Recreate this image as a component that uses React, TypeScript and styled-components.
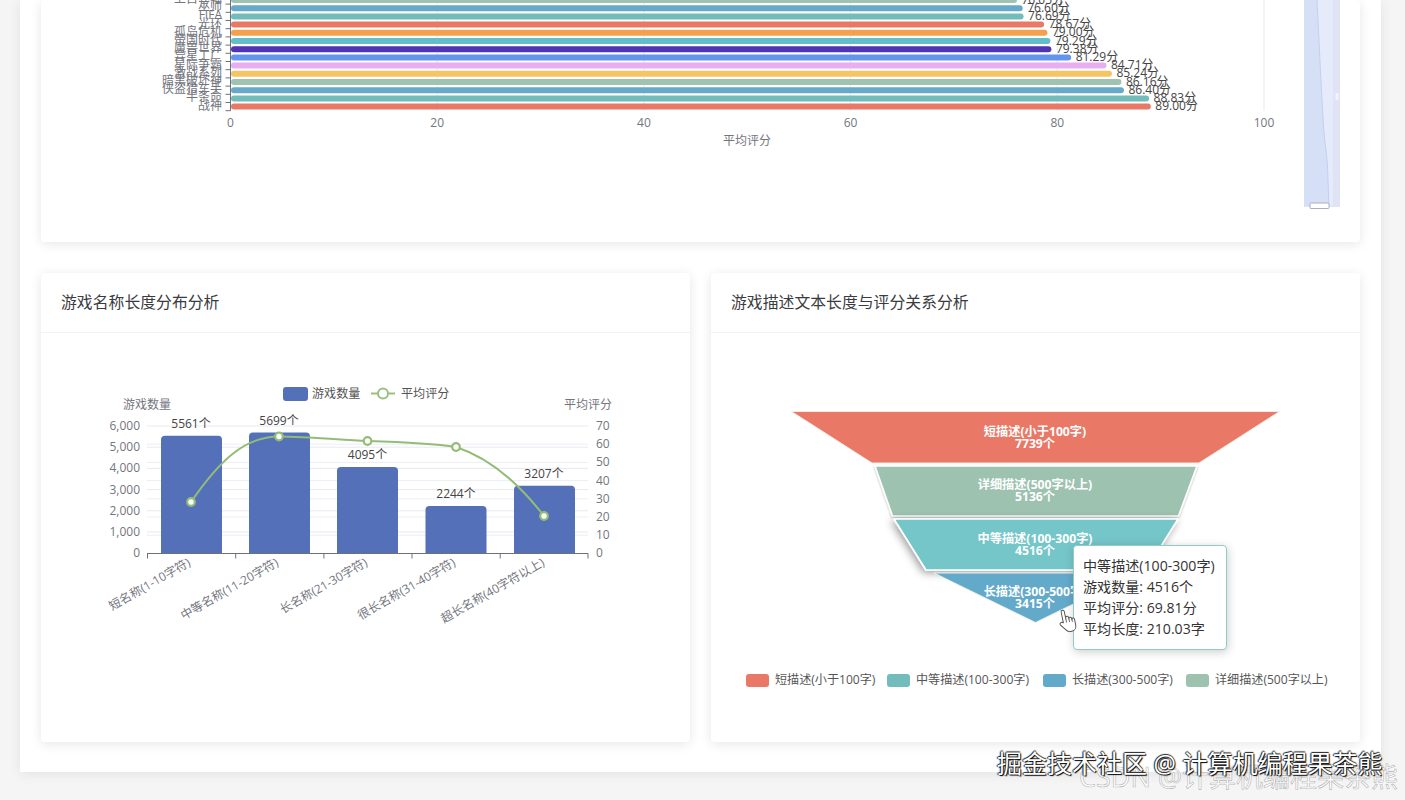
import React from "react";
import styled, { createGlobalStyle } from "styled-components";

const FONT = '"Open Sans", "Noto Sans CJK SC", sans-serif';

const Global = createGlobalStyle`
  html, body { margin: 0; padding: 0; background: #f5f5f5; }
  body { font-family: ${FONT}; }
  #root { height: 800px; overflow: hidden; }
`;

const Page = styled.main`
  position: relative;
  height: 800px;
  overflow: hidden;
  background: #f5f5f5;
`;

const Sheet = styled.div`
  width: 1361px;
  height: 772px;
  margin-left: 20px;
  padding: 0 21px;
  box-sizing: border-box;
  background: #fff;
  box-shadow: 0 2px 12px rgba(0, 0, 0, 0.08);
  display: flex;
  flex-direction: column;
  gap: 31px;
`;

const Card = styled.section<{ $height: number }>`
  position: relative;
  height: ${(p) => p.$height}px;
  background: #fff;
  border-radius: 4px;
  box-shadow: 0 2px 12px rgba(0, 0, 0, 0.1);
  display: flex;
  flex-direction: column;
  overflow: hidden;
`;

const Row = styled.div`
  display: grid;
  grid-template-columns: 1fr 1fr;
  gap: 21px;
`;

const CardHead = styled.header`
  height: 59px;
  padding: 0 20px;
  display: flex;
  align-items: center;
  font-size: 15.85px;
  line-height: 59px;
  color: #3a3c40;
  border-bottom: 1px solid #f0f2f5;
`;

const Chart = styled.svg`
  display: block;
  flex: 1;
  width: 100%;
  font-family: ${FONT};
`;

const Muted = styled.text<{ $anchor?: string }>`
  font-size: 12px;
  fill: #74767e;
  text-anchor: ${(p) => p.$anchor || "middle"};
  dominant-baseline: central;
`;

const Value = styled.text<{ $anchor?: string }>`
  font-size: 12px;
  fill: #444;
  text-anchor: ${(p) => p.$anchor || "middle"};
  dominant-baseline: central;
`;

const LegendText = styled.text`
  font-size: 12.1px;
  fill: #555;
  dominant-baseline: central;
`;

const FunnelText = styled.text`
  font-size: 12.2px;
  font-weight: 700;
  fill: #fff;
  text-anchor: middle;
  dominant-baseline: central;
`;

const Tooltip = styled.div`
  position: absolute;
  left: 362px;
  top: 272px;
  width: 154px;
  height: 105px;
  box-sizing: border-box;
  padding: 9px 9px;
  background: #fff;
  border: 1px solid #8fcbc7;
  border-radius: 4px;
  box-shadow: 1px 2px 10px rgba(0, 0, 0, 0.2);
  font-size: 14.1px;
  line-height: 21px;
  color: #333;
  white-space: nowrap;
`;

const Cursor = styled.svg`
  position: absolute;
  left: 347px;
  top: 335px;
  width: 18px;
  height: 25px;
  transform: rotate(-12deg);
`;

const Marks = styled.div`
  position: absolute;
  inset: 0;
  pointer-events: none;
`;

const Juejin = styled.div`
  position: absolute;
  left: 997px;
  top: 746px;
  font-size: 25px;
  line-height: 34px;
  color: #fff;
  white-space: nowrap;
  text-shadow: 1px 1px 1px #000, -1px 0 1px #222, 0 -1px 1px #222;
`;

const Csdn = styled.div`
  position: absolute;
  left: 1079px;
  top: 759px;
  font-size: 27px;
  line-height: 36px;
  color: rgba(255, 255, 255, 0.75);
  white-space: nowrap;
  -webkit-text-stroke: 0.6px rgba(120, 120, 120, 0.55);
`;

const bars = [
  { n: "上古卷轴", v: 76.05, c: "#9fc3b0", l: "76.05分" },
  { n: "巫师", v: 76.6, c: "#66a9c9", l: "76.60分" },
  { n: "FIFA", v: 76.69, c: "#72bcbb", l: "76.69分" },
  { n: "光环", v: 78.67, c: "#ea7866", l: "78.67分" },
  { n: "孤岛危机", v: 79.0, c: "#f3a14f", l: "79.00分" },
  { n: "帝国时代", v: 79.29, c: "#62bfca", l: "79.29分" },
  { n: "魔兽世界", v: 79.38, c: "#4f35b5", l: "79.38分" },
  { n: "异星工厂", v: 81.29, c: "#6495ed", l: "81.29分" },
  { n: "星际争霸", v: 84.71, c: "#e9aef0", l: "84.71分" },
  { n: "激战系列", v: 85.24, c: "#f5c463", l: "85.24分" },
  { n: "暗黑破坏神", v: 86.16, c: "#9fc3b0", l: "86.16分" },
  { n: "侠盗猎车手", v: 86.4, c: "#66a9c9", l: "86.40分" },
  { n: "半条命", v: 88.83, c: "#72bcbb", l: "88.83分" },
  { n: "战神", v: 89.0, c: "#ea7866", l: "89.00分" },
];

const RankChart = () => {
  const x0 = 230.5;
  const unit = 10.335;
  const rowY = (i: number) => 106.6 - (13 - i) * 8.2;
  return (
    <Chart viewBox="41 0 1319 242" preserveAspectRatio="none">
      {[20, 40, 60, 80, 100].map((t) => (
        <line key={t} x1={x0 + t * unit} x2={x0 + t * unit} y1="0" y2="110.5" stroke="#e6e9f0" />
      ))}
      <line x1={x0} x2={x0} y1="0" y2="110.5" stroke="#6e7079" />
      {bars.map((b, i) => (
        <line key={"t" + i} x1="225.5" x2={x0} y1={rowY(i) + 4.1} y2={rowY(i) + 4.1} stroke="#6e7079" />
      ))}
      {bars.map((b, i) => (
        <rect key={b.n} x={x0 + 0.5} y={rowY(i) - 3} width={b.v * unit} height="6" rx="3" fill={b.c} />
      ))}
      {bars.map((b, i) => (
        <Muted key={"n" + i} x="222" y={rowY(i) - 1.5} $anchor="end">{b.n}</Muted>
      ))}
      {bars.map((b, i) => (
        <Value key={"v" + i} x={x0 + b.v * unit + 5} y={rowY(i) - 1} $anchor="start">{b.l}</Value>
      ))}
      {[0, 20, 40, 60, 80, 100].map((t) => (
        <Muted key={"x" + t} x={x0 + t * unit} y="122">{t}</Muted>
      ))}
      <Muted x="747" y="140">平均评分</Muted>
      <rect x="1304" y="0" width="36" height="207" fill="#dfe3f3" />
      <rect x="1304" y="0" width="29" height="206" fill="#e6ebfb" />
      <path d="M1304 0H1317C1319 40 1321 83 1322 100C1323 120 1324 137 1326 150C1328 165 1328 185 1329 206H1304Z" fill="#d5dff6" />
      <path d="M1317 0C1319 40 1321 83 1322 100C1323 120 1324 137 1326 150C1328 165 1328 185 1329 206" fill="none" stroke="#c2cff0" />
      <rect x="1335.5" y="93" width="3" height="7" rx="1" fill="#f2f4fb" />
      <rect x="1310" y="203" width="19" height="5.5" rx="1" fill="#fff" stroke="#aab0bd" />
    </Chart>
  );
};

const nameBars = [
  { x: 161, top: 435.7, label: "5561个", lx: 191, ly: 423.5 },
  { x: 249, top: 432.5, label: "5699个", lx: 279, ly: 420.5 },
  { x: 337, top: 467, label: "4095个", lx: 367.5, ly: 454.5 },
  { x: 425.5, top: 506, label: "2244个", lx: 456, ly: 493.5 },
  { x: 514, top: 485.7, label: "3207个", lx: 544, ly: 473.5 },
];

const nameTicks = [
  { t: "短名称(1-10字符)", x: 192 },
  { t: "中等名称(11-20字符)", x: 280 },
  { t: "长名称(21-30字符)", x: 369 },
  { t: "很长名称(31-40字符)", x: 457 },
  { t: "超长名称(40字符以上)", x: 546 },
];

const points = [[191, 502], [279, 436.5], [367.5, 441], [456, 447], [544, 516]];

const NameChart = () => (
  <Chart viewBox="41 333 649 409" preserveAspectRatio="none">
    {[0, 1, 2, 3, 4, 5].map((i) => (
      <line key={"a" + i} x1="147" x2="588" y1={426 + i * 21.2} y2={426 + i * 21.2} stroke="#e6e9f0" />
    ))}
    {[1, 2, 3, 4, 5, 6].map((i) => (
      <line key={"b" + i} x1="147" x2="588" y1={426 + i * 18.2} y2={426 + i * 18.2} stroke="#ebeef3" />
    ))}
    {nameBars.map((b) => (
      <path
        key={b.x}
        d={`M${b.x} 553.5V${b.top + 4}Q${b.x} ${b.top} ${b.x + 4} ${b.top}H${b.x + 57}Q${b.x + 61} ${b.top} ${b.x + 61} ${b.top + 4}V553.5Z`}
        fill="#5470b8"
      />
    ))}
    <line x1="147" x2="588" y1="553.5" y2="553.5" stroke="#6e7079" />
    {[147.5, 235.7, 323.9, 412, 500.2, 588].map((x) => (
      <line key={x} x1={x} x2={x} y1="553.5" y2="558.5" stroke="#6e7079" />
    ))}
    {["6,000", "5,000", "4,000", "3,000", "2,000", "1,000", "0"].map((t, i) => (
      <Muted key={t} x="140" y={425.5 + i * 21.2} $anchor="end">{t}</Muted>
    ))}
    {[70, 60, 50, 40, 30, 20, 10, 0].map((t, i) => (
      <Muted key={t} x="596" y={425.5 + i * 18.2} $anchor="start">{t}</Muted>
    ))}
    <Muted x="147" y="404">游戏数量</Muted>
    <Muted x="588" y="404">平均评分</Muted>
    <rect x="283" y="387" width="25" height="14" rx="3" fill="#5470b8" />
    <LegendText x="312" y="393.5">游戏数量</LegendText>
    <line x1="371" x2="395" y1="393.5" y2="393.5" stroke="#9bbf7e" strokeWidth="2" />
    <circle cx="383" cy="393.5" r="5" fill="#fff" stroke="#9bbf7e" strokeWidth="2" />
    <LegendText x="401" y="393.5">平均评分</LegendText>
    {nameBars.map((b) => (
      <Value key={b.label} x={b.lx} y={b.ly}>{b.label}</Value>
    ))}
    <path
      d="M191 502C220 460 245 436.5 279 436.5C310 436.5 340 440 367.5 441C400 442 430 443 456 447C490 458 520 485 544 516"
      fill="none"
      stroke="#93bd76"
      strokeWidth="2"
    />
    {points.map(([x, y]) => (
      <circle key={x} cx={x} cy={y} r="3.8" fill="#fff" stroke="#93bd76" strokeWidth="2.2" />
    ))}
    {nameTicks.map((t) => (
      <Muted key={t.t} x={t.x - 3} y="561" $anchor="end" transform={`rotate(-30 ${t.x - 3} 561)`}>{t.t}</Muted>
    ))}
  </Chart>
);

const funnel = [
  { d: "M791.5 411.5H1279.5L1199 463H872Z", c: "#ea7866", a: "短描述(小于100字)", b: "7739个", y: 431 },
  { d: "M875 466H1197L1178.5 516H892.5Z", c: "#9ec2b0", a: "详细描述(500字以上)", b: "5136个", y: 484 },
  { d: "M894 519H1178L1146 570H926Z", c: "#74c6c9", a: "中等描述(100-300字)", b: "4516个", y: 538 },
  { d: "M934 573H1137L1035.5 622.5Z", c: "#63a9c9", a: "长描述(300-500字)", b: "3415个", y: 591 },
];

const legend = [
  { x: 746, c: "#ea7866", t: "短描述(小于100字)" },
  { x: 887, c: "#72bcbb", t: "中等描述(100-300字)" },
  { x: 1043, c: "#63a9c9", t: "长描述(300-500字)" },
  { x: 1186, c: "#9ec2b0", t: "详细描述(500字以上)" },
];

const FunnelChart = () => (
  <Chart viewBox="711 333 649 409" preserveAspectRatio="none">
    <defs>
      <filter id="lift" x="-20%" y="-20%" width="140%" height="150%">
        <feDropShadow dx="0" dy="1" stdDeviation="1" floodColor="#000" floodOpacity="0.3" />
      </filter>
      <filter id="hover" x="-20%" y="-30%" width="140%" height="170%">
        <feDropShadow dx="-2" dy="2" stdDeviation="4" floodColor="#000" floodOpacity="0.4" />
      </filter>
    </defs>
    {funnel.map((f, i) => (
      <path
        key={f.c}
        d={f.d}
        fill={f.c}
        stroke={i === 0 || i === 3 ? "#eeeee6" : "#fff"}
        strokeWidth={i === 0 || i === 3 ? 1 : 1.6}
        strokeLinejoin="round"
        filter={i === 2 ? "url(#hover)" : i === 1 ? "url(#lift)" : undefined}
      />
    ))}
    {funnel.map((f) => (
      <React.Fragment key={f.a}>
        <FunnelText x="1035" y={f.y}>{f.a}</FunnelText>
        <FunnelText x="1035" y={f.y + 12}>{f.b}</FunnelText>
      </React.Fragment>
    ))}
    {legend.map((l) => (
      <React.Fragment key={l.t}>
        <rect x={l.x} y="674" width="23" height="13" rx="3" fill={l.c} />
        <LegendText x={l.x + 29} y="679.5">{l.t}</LegendText>
      </React.Fragment>
    ))}
  </Chart>
);

export default function App() {
  return (
    <>
      <Global />
      <Page>
        <Sheet>
          <Card $height={242}>
            <RankChart />
          </Card>
          <Row>
            <Card $height={469}>
              <CardHead>游戏名称长度分布分析</CardHead>
              <NameChart />
            </Card>
            <Card $height={469}>
              <CardHead>游戏描述文本长度与评分关系分析</CardHead>
              <FunnelChart />
              <Tooltip>
                中等描述(100-300字)
                <br />
                游戏数量: 4516个
                <br />
                平均评分: 69.81分
                <br />
                平均长度: 210.03字
              </Tooltip>
              <Cursor viewBox="0 0 18 25">
                <path
                  d="M5 14V3.2a1.6 1.6 0 0 1 3.2 0V11V9.8a1.5 1.5 0 0 1 3 0V11.4a1.4 1.4 0 0 1 2.8 0V12.6a1.3 1.3 0 0 1 2.6 0V18.5c0 3-2 5.5-5 5.5H10c-2 0-3.2-1-4.2-2.8L1.7 15.6c-1-1.8 1.6-3.4 3.3-1.6Z"
                  fill="#fff"
                  stroke="#555"
                  strokeWidth="1"
                  strokeLinejoin="round"
                />
                <path d="M8.2 11V14.5M11.2 11V14.5M14 12V15" stroke="#555" strokeWidth="0.8" fill="none" />
              </Cursor>
            </Card>
          </Row>
        </Sheet>
        <Marks>
          <Csdn>CSDN @计算机编程果茶熊</Csdn>
          <Juejin>掘金技术社区 @ 计算机编程果茶熊</Juejin>
        </Marks>
      </Page>
    </>
  );
}
